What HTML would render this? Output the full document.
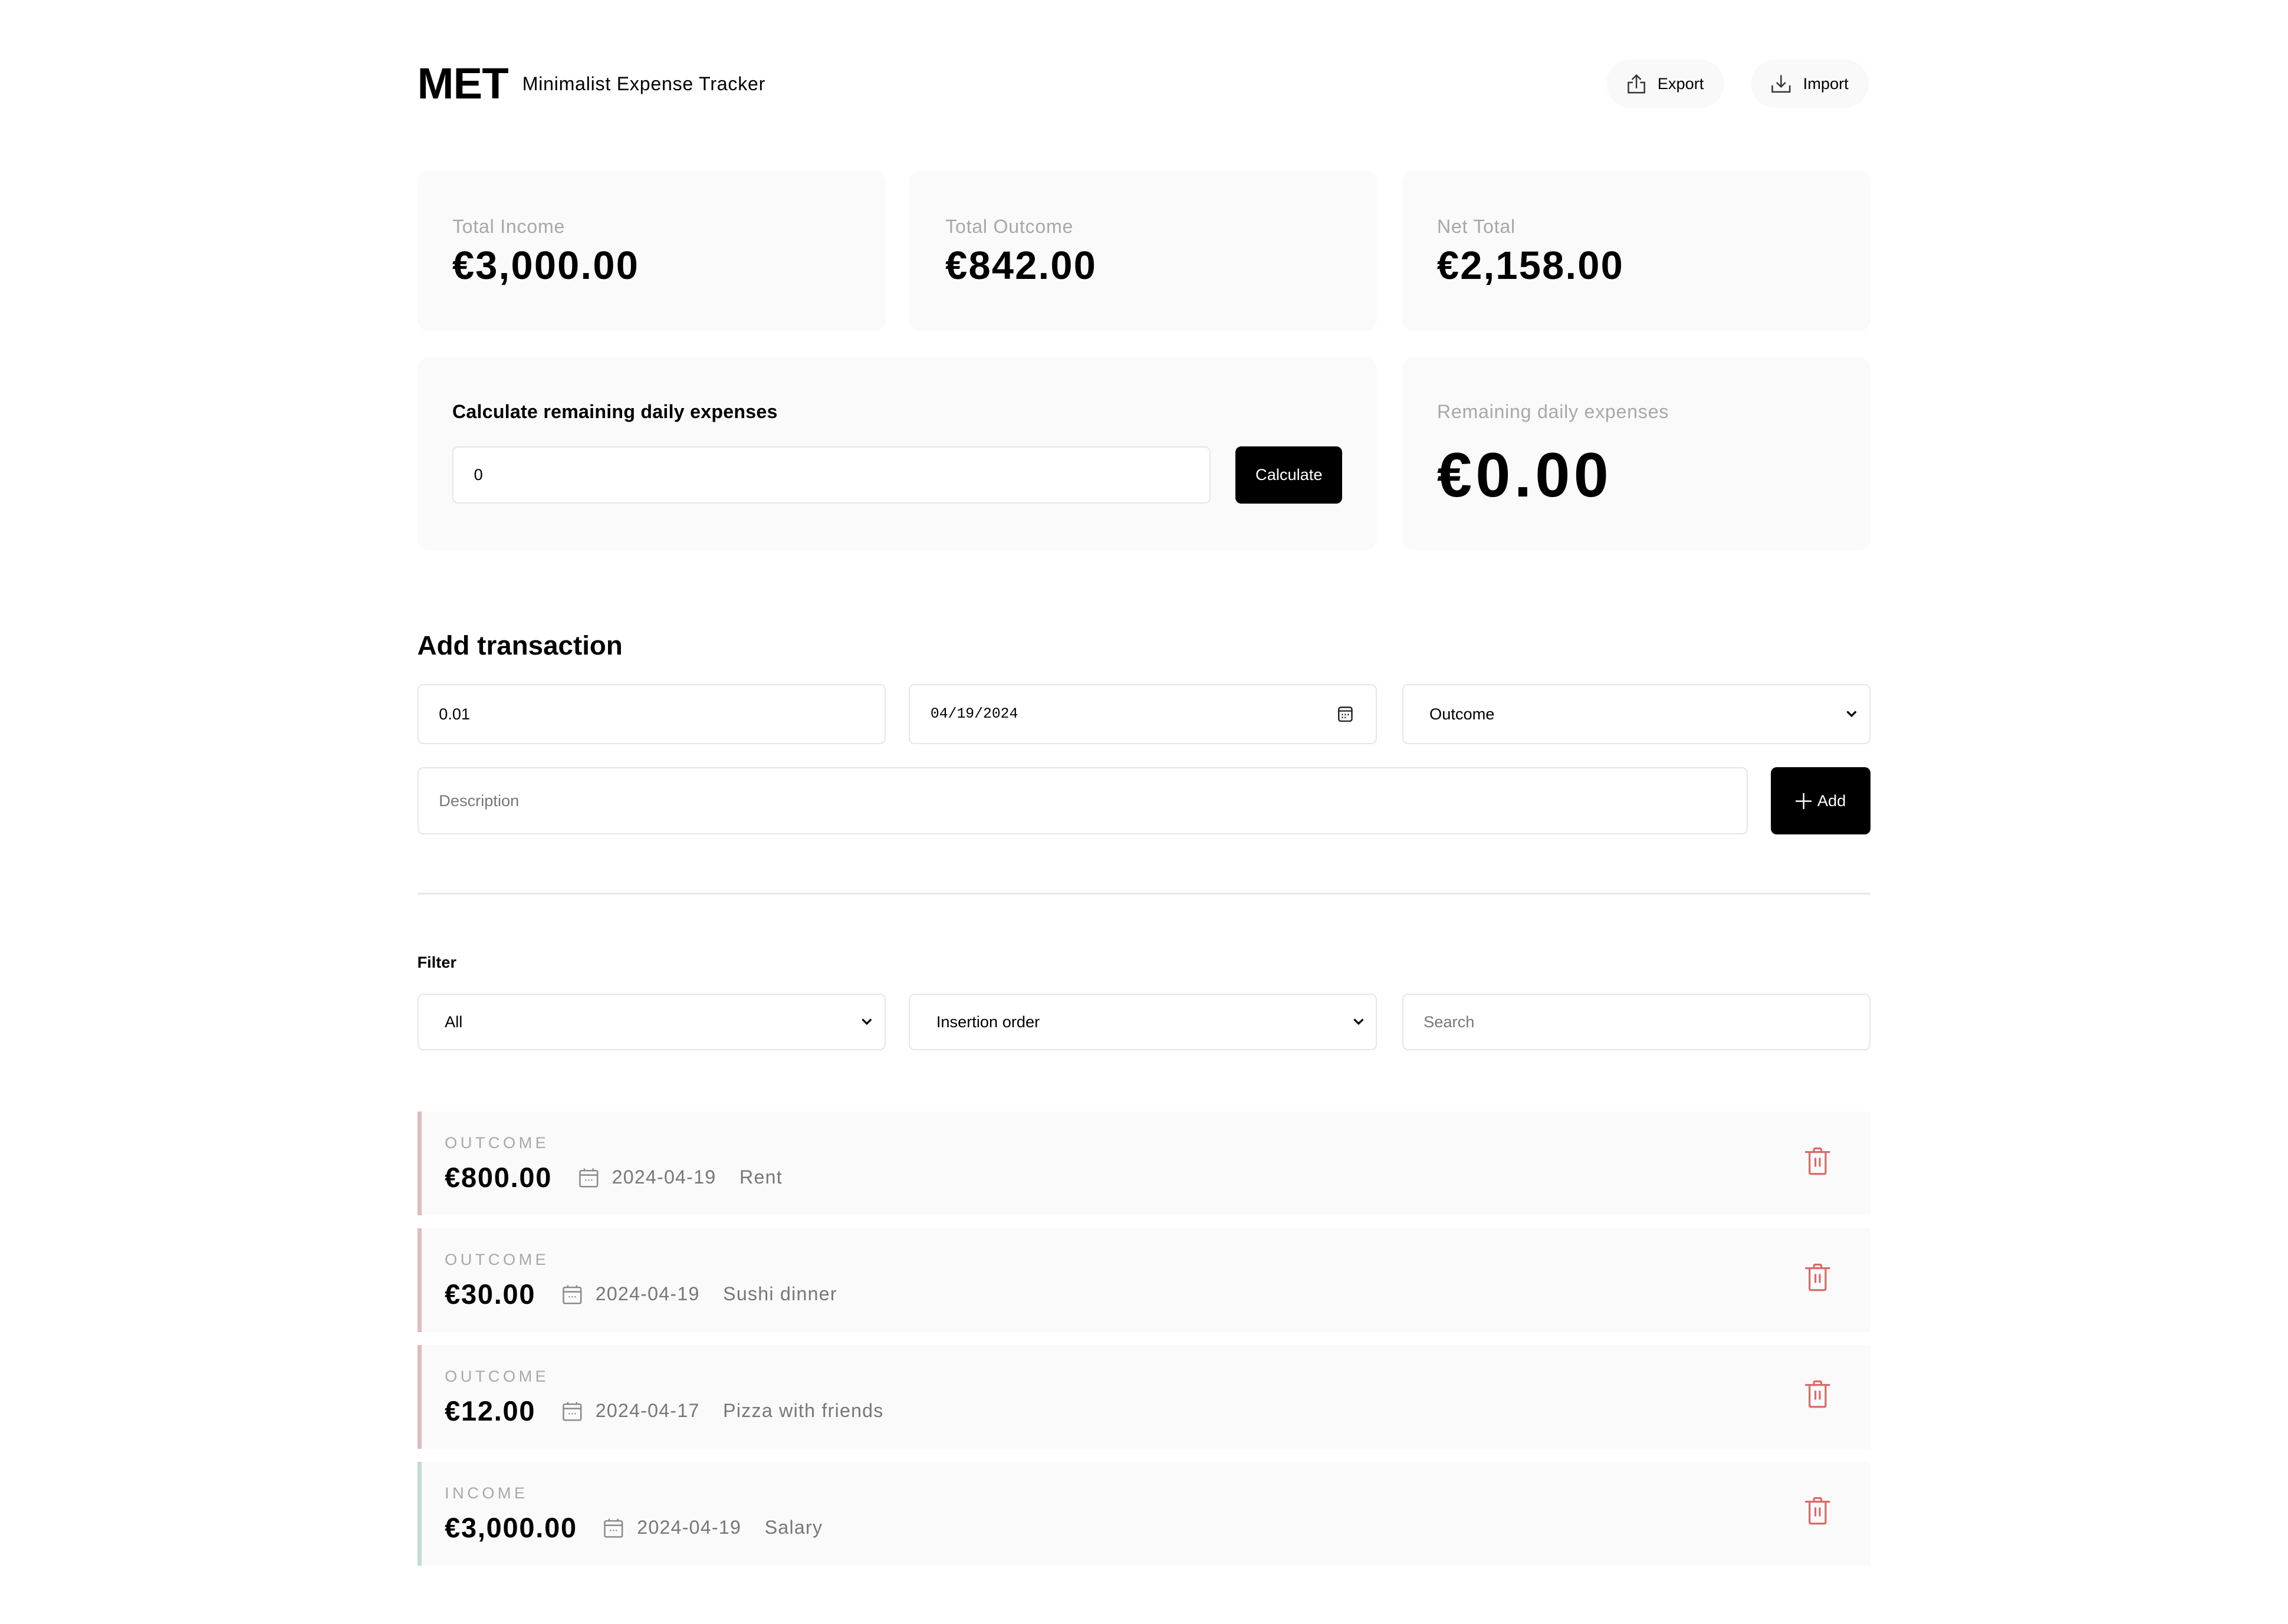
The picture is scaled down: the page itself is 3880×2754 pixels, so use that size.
<!DOCTYPE html>
<html><head><meta charset="utf-8">
<style>
html{zoom:2.474}
body{margin:0;background:#fff;font-family:"Liberation Sans",Arial,sans-serif;color:#000;width:1568px;height:1113px;position:relative;overflow:hidden}
.a{position:absolute;box-sizing:border-box}
.card{background:#fafafa;border-radius:8px}
.lbl{font-size:13px;color:#a8a8a8;letter-spacing:0.3px}
.val{font-weight:bold;font-size:27px;letter-spacing:0.9px}
.inp{border:1px solid #e6e6e6;border-radius:4px;background:#fff;font-size:11px;display:flex;align-items:center;padding-left:14px}
.pill{background:#f9f9f9;border-radius:17px;font-size:11px;display:flex;align-items:center;justify-content:center;gap:8px}
.row{background:#fafafa;left:286px;width:996px;height:71px}
.row .t{position:absolute;left:16px;top:15px;font-size:11px;letter-spacing:2.2px;color:#a8a8a8}
.row .m{position:absolute;left:16px;top:34px;display:flex;align-items:center;font-size:13px;color:#777;letter-spacing:0.5px}
.row .m b{font-size:19px;color:#000;margin-right:18px;letter-spacing:0.7px}
.row .m svg{margin-right:9px}
.row .m span{margin-right:16px}
.row .tr{position:absolute;left:948px;top:24px}
.chev{position:absolute;right:8px;top:50%;margin-top:-3px}
</style></head><body>
<div class="a" style="left:286px;top:40px;font-size:30px;font-weight:bold;letter-spacing:-0.3px">MET</div>
<div class="a" style="left:358px;top:50px;font-size:13px;letter-spacing:0.3px">Minimalist Expense Tracker</div>
<div class="a pill" style="left:1101px;top:41px;width:81px;height:33px">
<svg width="13" height="14" viewBox="0 0 13 14" fill="none" stroke="#333" stroke-width="1"><path d="M6.5 10V1M3.5 4L6.5 1L9.5 4M4 6H1V13H12V6H9"/></svg>Export</div>
<div class="a pill" style="left:1200px;top:41px;width:81px;height:33px">
<svg width="14" height="14" viewBox="0 0 14 14" fill="none" stroke="#333" stroke-width="1"><path d="M7 1V9M4 6L7 9L10 6M1 8V12.5H13V8"/></svg>Import</div>

<div class="a card" style="left:286px;top:117px;width:321px;height:110px"><div class="a lbl" style="left:24px;top:31px">Total Income</div><div class="a val" style="left:24px;top:50px">€3,000.00</div></div>
<div class="a card" style="left:623px;top:117px;width:321px;height:110px"><div class="a lbl" style="left:25px;top:31px">Total Outcome</div><div class="a val" style="left:25px;top:50px">€842.00</div></div>
<div class="a card" style="left:961px;top:117px;width:321px;height:110px"><div class="a lbl" style="left:24px;top:31px">Net Total</div><div class="a val" style="left:24px;top:50px">€2,158.00</div></div>

<div class="a card" style="left:286px;top:245px;width:658px;height:132px">
<div class="a" style="left:24px;top:30px;font-size:13px;font-weight:bold;letter-spacing:0.1px">Calculate remaining daily expenses</div>
<div class="a inp" style="left:24px;top:61px;width:520px;height:39px">0</div>
<div class="a" style="left:561px;top:61px;width:73px;height:39px;background:#000;color:#fff;border-radius:4px;font-size:11px;display:flex;align-items:center;justify-content:center">Calculate</div>
</div>
<div class="a card" style="left:961px;top:245px;width:321px;height:132px">
<div class="a lbl" style="left:24px;top:30px">Remaining daily expenses</div>
<div class="a" style="left:24px;top:56px;font-size:43px;font-weight:bold;letter-spacing:2.5px">€0.00</div>
</div>

<div class="a" style="left:286px;top:432px;font-size:18.5px;font-weight:bold">Add transaction</div>
<div class="a inp" style="left:286px;top:469px;width:321px;height:41px">0.01</div>
<div class="a inp" style="left:623px;top:469px;width:321px;height:41px;font-family:'Liberation Mono',monospace;font-size:10px">04/19/2024
<svg style="position:absolute;right:16px;top:14px" width="10" height="11" viewBox="0 0 10 11" fill="none" stroke="#222"><rect x="0.5" y="1" width="9" height="9.5" rx="1.5"/><path d="M0.5 3.5H9.5M3 5.5v1M5 5.5v1M7 5.5v1M3 7.5v1M5 7.5v1" stroke-width="0.9"/></svg></div>
<div class="a inp" style="left:961px;top:469px;width:321px;height:41px;padding-left:18px">Outcome<svg class="chev" width="8" height="5" viewBox="0 0 8 5" fill="none" stroke="#000" stroke-width="1.3"><path d="M1 1L4 4L7 1"/></svg></div>
<div class="a inp" style="left:286px;top:526px;width:912px;height:46px;color:#777">Description</div>
<div class="a" style="left:1214px;top:526px;width:68px;height:46px;background:#000;color:#fff;border-radius:4px;font-size:11px;display:flex;align-items:center;justify-content:center;gap:4px"><svg width="11" height="11" viewBox="0 0 11 11" stroke="#fff" stroke-width="1"><path d="M5.5 0V11M0 5.5H11"/></svg>Add</div>

<div class="a" style="left:286px;top:612px;width:996px;height:1px;background:#e8e8e8"></div>
<div class="a" style="left:286px;top:653px;font-size:11px;font-weight:bold">Filter</div>
<div class="a inp" style="left:286px;top:681px;width:321px;height:39px;padding-left:18px">All<svg class="chev" width="8" height="5" viewBox="0 0 8 5" fill="none" stroke="#000" stroke-width="1.3"><path d="M1 1L4 4L7 1"/></svg></div>
<div class="a inp" style="left:623px;top:681px;width:321px;height:39px;padding-left:18px">Insertion order<svg class="chev" width="8" height="5" viewBox="0 0 8 5" fill="none" stroke="#000" stroke-width="1.3"><path d="M1 1L4 4L7 1"/></svg></div>
<div class="a inp" style="left:961px;top:681px;width:321px;height:39px;color:#777">Search</div>

<svg width="0" height="0" style="position:absolute"><defs>
<symbol id="cal" viewBox="0 0 14 14"><g fill="none" stroke="#888" stroke-width="1"><rect x="1" y="2.5" width="12" height="11" rx="1"/><path d="M1 5.5H13M4 1V3M10 1V3"/></g><g fill="#888"><circle cx="5" cy="9" r=".5"/><circle cx="7" cy="9" r=".5"/><circle cx="9" cy="9" r=".5"/></g></symbol>
<symbol id="tr" viewBox="0 0 18 20"><g fill="none" stroke="#d86a6a" stroke-width="1.3" stroke-linecap="round"><path d="M1 3.5H17M3.5 3.5V17.5Q3.5 18.5 4.5 18.5H13.5Q14.5 18.5 14.5 17.5V3.5M6.5 3.5V2Q6.5 1 7.5 1H10.5Q11.5 1 11.5 2V3.5M7.5 8V13M10.5 8V13"/></g></symbol>
</defs></svg>

<div class="a row" style="top:762px;border-left:3px solid #dcbdbd"><div class="t">OUTCOME</div><div class="m"><b>€800.00</b><svg width="14" height="14"><use href="#cal"/></svg><span>2024-04-19</span><span>Rent</span></div><svg class="tr" width="18" height="20"><use href="#tr"/></svg></div>
<div class="a row" style="top:842px;border-left:3px solid #dcbdbd"><div class="t">OUTCOME</div><div class="m"><b>€30.00</b><svg width="14" height="14"><use href="#cal"/></svg><span>2024-04-19</span><span>Sushi dinner</span></div><svg class="tr" width="18" height="20"><use href="#tr"/></svg></div>
<div class="a row" style="top:922px;border-left:3px solid #dcbdbd"><div class="t">OUTCOME</div><div class="m"><b>€12.00</b><svg width="14" height="14"><use href="#cal"/></svg><span>2024-04-17</span><span>Pizza with friends</span></div><svg class="tr" width="18" height="20"><use href="#tr"/></svg></div>
<div class="a row" style="top:1002px;border-left:3px solid #c3dccf"><div class="t">INCOME</div><div class="m"><b>€3,000.00</b><svg width="14" height="14"><use href="#cal"/></svg><span>2024-04-19</span><span>Salary</span></div><svg class="tr" width="18" height="20"><use href="#tr"/></svg></div>
</body></html>
